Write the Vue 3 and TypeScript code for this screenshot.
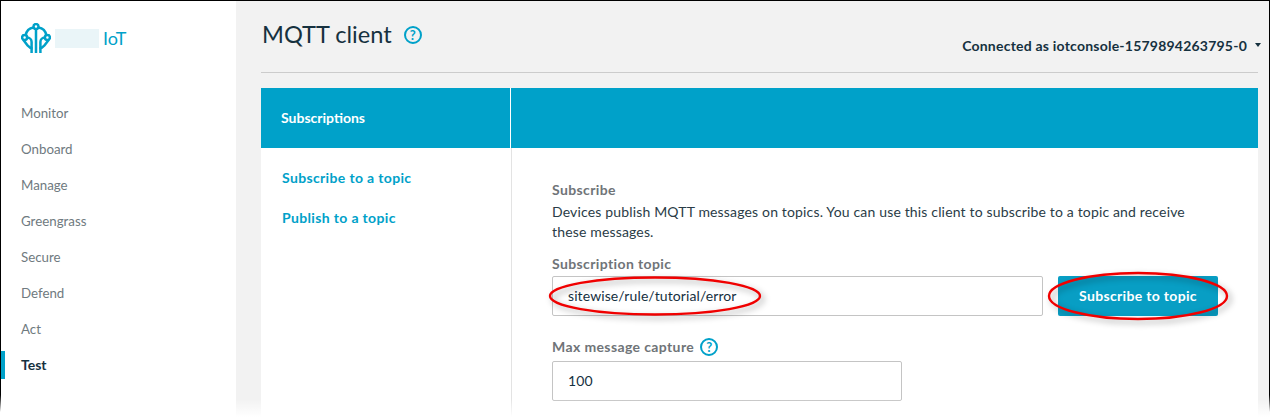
<script setup lang="ts">
const navItems: string[] = ['Monitor', 'Onboard', 'Manage', 'Greengrass', 'Secure', 'Defend', 'Act', 'Test']
</script>

<template>
  <div class="page">
    <aside class="sidebar">
      <div class="brand">
        <svg class="logo" viewBox="0 0 30 30" fill="none" stroke="#00a1c9" stroke-width="2.5">
          <circle cx="15" cy="3.6" r="2.5" />
          <circle cx="3.6" cy="14.5" r="2.5" />
          <circle cx="26.4" cy="14.5" r="2.5" />
          <path d="M12.6 4.4C8 5 5.4 7.8 4.8 12.2M17.4 4.4C22 5 24.6 7.8 25.2 12.2" />
          <path d="M2.2 16.8 6.6 22.6c1.4 1.8 3.2 2.6 5 2.6M27.8 16.8 23.4 22.6c-1.4 1.8-3.2 2.6-5 2.6" />
          <path d="M15 6.2V30M10.6 30V19C10.6 16.4 8.6 14.5 6 14.5M19.4 30V19C19.4 16.4 21.4 14.5 24 14.5" />
        </svg>
        <span class="redacted"></span>
        <span class="brand-name">IoT</span>
      </div>
      <nav class="nav">
        <a v-for="item in navItems" :key="item" class="nav-item" :class="{ active: item === 'Test' }">{{ item }}</a>
      </nav>
    </aside>
    <main class="main">
      <header class="head">
        <div class="title-row">
          <h1>MQTT client</h1>
          <span class="help help-title">?</span>
        </div>
        <div class="conn">Connected as iotconsole-1579894263795-0<span class="caret"></span></div>
      </header>
      <section class="panel">
        <div class="side-col">
          <div class="side-head">Subscriptions</div>
          <div class="side-links">
            <a>Subscribe to a topic</a>
            <a>Publish to a topic</a>
          </div>
        </div>
        <div class="content-col">
          <div class="content-head"></div>
          <div class="content">
            <div class="label">Subscribe</div>
            <p class="desc">Devices publish MQTT messages on topics. You can use this client to subscribe to a topic and receive these messages.</p>
            <div class="label topic-label">Subscription topic</div>
            <div class="topic-row">
              <input class="field topic" value="sitewise/rule/tutorial/error" />
              <button class="btn">Subscribe to topic</button>
            </div>
            <div class="label max-label">Max message capture <span class="help">?</span></div>
            <input class="field max" value="100" />
          </div>
        </div>
      </section>
    </main>
    <svg class="marks" width="1270" height="417" fill="none">
      <ellipse class="mark" cx="655" cy="296" rx="105" ry="18.5" />
      <ellipse class="mark" cx="1138" cy="296" rx="89" ry="23" />
    </svg>
    <div class="fade"></div>
    <div class="edges"></div>
  </div>
</template>

<style>
html, body { margin: 0; padding: 0; background: #fff; }
</style>

<style scoped>
.page {
  position: relative;
  display: flex;
  width: 1270px;
  height: 417px;
  overflow: hidden;
  font-family: Lato, "Open Sans", sans-serif;
  font-size: 14px;
  color: #16313f;
  background: #f2f2f2;
}
.sidebar { width: 236px; flex: none; background: #fff; box-sizing: border-box; padding: 23px 0 0 1px; }
.brand { display: flex; align-items: center; padding-left: 20px; height: 30px; }
.logo { width: 30px; height: 30px; flex: none; }
.redacted { width: 44px; height: 19px; margin: 0 4px 0 4px; background: #eaf5f8; }
.brand-name { font-size: 18px; color: #00a1c9; }
.nav { display: flex; flex-direction: column; gap: 8px; margin-top: 46px; }
.nav-item { height: 28px; line-height: 28px; padding-left: 20px; font-size: 13.3px; color: #6f7a80; }
.nav-item.active { font-size: 14px; font-weight: 700; color: #16313f; box-shadow: inset 4px 0 0 #00a1c9; }
.main { flex: 1; min-width: 0; padding: 0 12px 0 25px; }
.head {
  height: 72px;
  border-bottom: 1px solid #ccc;
  display: flex;
  justify-content: space-between;
}
.title-row { display: flex; align-items: center; height: 68px; gap: 12px; }
h1 { margin: 0; padding-left: 1px; font-size: 23.6px; font-weight: 400; color: #16313f; }
.help {
  display: inline-flex;
  align-items: center;
  justify-content: center;
  box-sizing: border-box;
  width: 18px;
  height: 18px;
  border: 2px solid #00a1c9;
  border-radius: 50%;
  color: #00a1c9;
  font-size: 13px;
  font-weight: 700;
  letter-spacing: 0;
}
.help-title { margin-top: 2px; }
.conn {
  align-self: flex-end;
  margin: 0 -3px 17px 0;
  font-size: 14px;
  font-weight: 700;
  letter-spacing: 0.22px;
  display: flex;
  align-items: center;
  line-height: 18px;
}
.caret { width: 0; height: 0; margin: -3px 0 0 8px; border: 3.5px solid transparent; border-top: 4px solid #16313f; border-bottom: 0; }
.panel { display: flex; margin-top: 15px; height: 340px; background: #fff; }
.side-col { width: 249px; flex: none; }
.side-head {
  height: 60px;
  line-height: 60px;
  padding-left: 20px;
  background: #00a1c9;
  color: #fff;
  font-weight: 700;
}
.side-links { display: flex; flex-direction: column; gap: 20px; padding: 20px 0 0 21px; }
.side-links a { line-height: 20px; color: #00a1c9; font-weight: 700; letter-spacing: 0.35px; }
.content-col { flex: 1; border-left: 1px solid #fff; box-shadow: inset 1px 0 0 #e3e3e3; }
.content-head { height: 60px; background: #00a1c9; box-shadow: -1px 0 0 #fff; }
.content { padding: 32px 40px 0 41px; }
.label { font-weight: 700; color: #6f7478; line-height: 20px; letter-spacing: 0.38px; }
.desc { margin: 2px 0 0; line-height: 20px; width: 650px; letter-spacing: 0.16px; color: #2a3c47; }
.topic-label { margin-top: 12px; }
.topic-row { display: flex; gap: 15px; margin-top: 2px; }
.field {
  box-sizing: border-box;
  height: 40px;
  border: 1px solid #c4c4c4;
  border-radius: 2px;
  padding: 0 15px 2px;
  font: inherit;
  letter-spacing: 0.1px;
  color: #16313f;
  background: #fff;
  outline: none;
}
.topic { width: 491px; }
.btn {
  width: 160px;
  height: 40px;
  border: 0;
  border-radius: 2px;
  padding: 0 0 2px;
  background: #089ec4;
  color: #fff;
  font: inherit;
  font-weight: 700;
  letter-spacing: 0.33px;
}
.max-label { display: flex; align-items: center; gap: 6px; margin-top: 21px; }
.max { display: block; width: 350px; margin-top: 4px; }
.marks { position: absolute; left: 0; top: 0; pointer-events: none; }
.mark { stroke: #f00000; stroke-width: 2.4; filter: drop-shadow(3px 3px 3px rgba(0, 0, 0, 0.35)); }
.fade {
  position: absolute;
  left: 0;
  right: 0;
  bottom: 0;
  height: 18px;
  background: linear-gradient(rgba(255, 255, 255, 0), #fff);
}
.edges {
  position: absolute;
  inset: 0;
  border-top: 1px solid #000;
  border-left: 1px solid #000;
  border-right: 1px solid #000;
  -webkit-mask-image: linear-gradient(#000 395px, transparent 412px);
  mask-image: linear-gradient(#000 395px, transparent 412px);
  pointer-events: none;
}
</style>
